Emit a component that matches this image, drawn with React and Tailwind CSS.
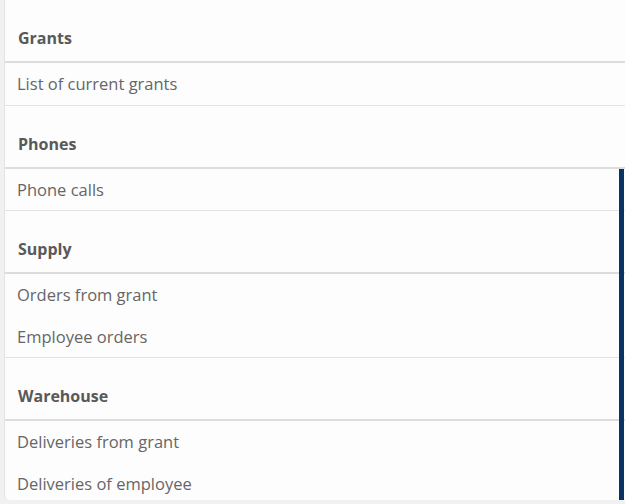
export default function App() {
  const sections = [
    { title: "Grants", items: ["List of current grants"] },
    { title: "Phones", items: ["Phone calls"] },
    { title: "Supply", items: ["Orders from grant", "Employee orders"] },
    { title: "Warehouse", items: ["Deliveries from grant", "Deliveries of employee"] },
  ];
  return (
    <div className="w-[625px] h-[504px] bg-[#f1f1f1] overflow-hidden" style={{ fontFamily: '"Open Sans", "Noto Sans", sans-serif' }}>
      <div className="relative ml-[4px] h-[500px] bg-[#fdfdfd] border-l border-[#e4e4e4] rounded-bl-[5px] overflow-hidden">
        {sections.map((s, i) => (
          <div key={s.title}>
            <div className={`flex items-end pl-[13px] pb-[11px] border-b-2 border-[#dcdcdc] ${i === 0 ? "h-[63px]" : "h-[64px] border-t border-t-[#e2e2e2]"}`}>
              <span className="text-[16px] font-bold text-[#595959]">{s.title}</span>
            </div>
            {s.items.map((it) => (
              <div key={it} className="h-[41.5px] flex items-center pl-[12px] pt-[2px]">
                <span className="text-[16.5px] text-[#666666]">{it}</span>
              </div>
            ))}
          </div>
        ))}
        <div className="absolute right-[1px] top-[169px] w-[5px] h-[331px] bg-[#083463]" />
      </div>
    </div>
  );
}
